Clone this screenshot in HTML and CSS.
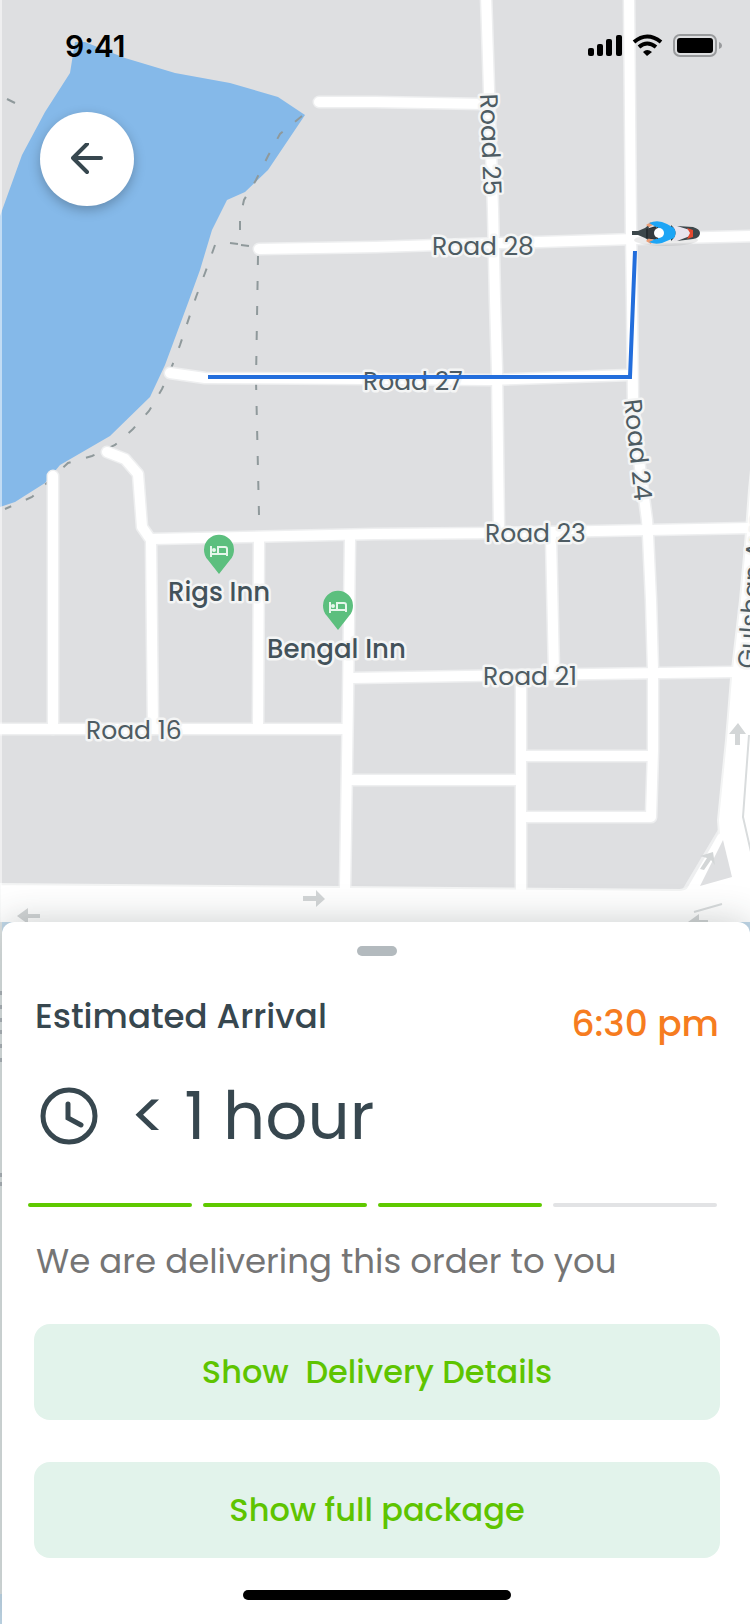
FILE: index.html
```html
<!DOCTYPE html>
<html lang="en">
<head>
<meta charset="utf-8">
<meta name="viewport" content="width=device-width, initial-scale=1">
<title>Order tracking</title>
<link rel="stylesheet" href="styles.css">
</head>
<body>
<main class="screen">
  <svg class="map" viewBox="0 0 750 1624" preserveAspectRatio="xMidYMin slice" role="img" aria-label="Delivery route map">
    <rect class="land" width="750" height="1624"/>
    <path class="water" d="M0 216 22 155 45 112 70 73 75 42H85L125 58 175 73 230 83 278 97 305 115 268 170 245 192 227 200 212 230 200 270 188 303 165 365 150 397 110 436 60 465 45 483 15 502 0 507Z"/>
    <g class="footpath">
      <path d="M302 116 280 134 268 156 256 180 244 200 240 218V232"/>
      <path d="M215 245 205 273 196 297 180 345 172 366 162 389 149 411 133 429 115 445 92 456 68 463 32 497 5 509"/>
      <path d="M258 256 256 380 259 515"/>
      <path d="M230 243 238 244M241 245 249 246M7 99 15 103"/>
    </g>
    <g class="road-edge">
      <path d="M486 -5 489 90 493 210 495 300 497 370 499 530"/>
      <path d="M629 -5 631 230 632 300 633 400 639 460 647 520 648 535 651 600 653 670V750L651 817H526"/>
      <path d="M259 249 375 247 635 239 755 236"/>
      <path d="M170 373 205 378 375 379 490 380 630 375"/>
      <path d="M152 539 375 534 500 533 755 528"/>
      <path d="M319 102H375L484 104"/>
      <path d="M352 678 520 675 735 672"/>
      <path d="M521 680V890M551 536 554 673M350 780H520M521 756H652"/>
      <path d="M53 476V729M107 452 125 459 138 474 142 527 151 540 153 729"/>
      <path d="M259 540 258 729M350 538 348 700 345 890M-5 729H345"/>
      <path d="M686 896 730 822"/>
    </g>
    <path class="avenue-edge" d="M0 884 343 887 680 890Q690 889 697 878L719 834 718 820 726 740 731 678 740 600 745 545 749 490 751 470V1624H0Z"/>
    <g class="road">
      <path d="M486 -5 489 90 493 210 495 300 497 370 499 530"/>
      <path d="M629 -5 631 230 632 300 633 400 639 460 647 520 648 535 651 600 653 670V750L651 817H526"/>
      <path d="M259 249 375 247 635 239 755 236"/>
      <path d="M170 373 205 378 375 379 490 380 630 375"/>
      <path d="M152 539 375 534 500 533 755 528"/>
      <path d="M319 102H375L484 104"/>
      <path d="M352 678 520 675 735 672"/>
      <path d="M521 680V890M551 536 554 673M350 780H520M521 756H652"/>
      <path d="M53 476V729M107 452 125 459 138 474 142 527 151 540 153 729"/>
      <path d="M259 540 258 729M350 538 348 700 345 890M-5 729H345"/>
      <path d="M692 890 722 838"/>
    </g>
    <path class="land" d="M700 886 723 840 732 877Z"/>
    <path class="divider" d="M749 735 743 817 751 852M694 912 722 904"/>
    <g class="lane-arrow">
      <path d="M303 896H316V890L325 899 316 907V901H303Z"/>
      <path d="M40 914H28V908L17 916 28 924V918H40Z"/>
      <path d="M735 745V734H729L738 723 746 734H740V745Z"/>
      <path d="M700 869 707 858 700 856 713 852 715 865 711 860 704 870Z"/>
      <path d="M708 920H699V914L688 922H708Z"/>
    </g>
    <g class="pin">
      <path d="M219 574 208 560A15 15 0 1 1 230 560Z"/>
      <path d="M338 630 327 616A15 15 0 1 1 349 616Z"/>
    </g>
    <g class="bed">
      <path d="M211 546V557M211 554H227M227 556V549Q227 547 225 547H218V554"/><circle cx="214" cy="550" r="1"/>
      <path d="M330 602V613M330 610H346M346 612V605Q346 603 344 603H337V610"/><circle cx="333" cy="606" r="1"/>
    </g>
    <g class="label">
      <text x="432" y="255">Road 28</text>
      <text x="363" y="390">Road 27</text>
      <text x="485" y="542">Road 23</text>
      <text x="483" y="685">Road 21</text>
      <text x="86" y="739">Road 16</text>
      <text transform="translate(480 94) rotate(88)">Road 25</text>
      <text transform="translate(624 400) rotate(84)">Road 24</text>
      <text transform="translate(755 669) rotate(-86)">Gulshan Ave</text>
    </g>
    <g class="label place">
      <text x="168" y="601">Rigs Inn</text>
      <text x="267" y="658">Bengal Inn</text>
    </g>
    <path class="route" d="M208 377H630L635 251"/>
    <g class="rider">
      <ellipse class="rider-shadow" cx="666" cy="240" rx="32" ry="6"/>
      <path fill="#3c474b" d="M632 231H638L645 228 651 223 648 229 650 233 648 237 651 242 645 238 638 235H632Z"/>
      <path fill="#e9e4ed" d="M674 226 691 228 697 233 691 238 674 241Z"/>
      <path fill="#3c474b" d="M677 226 693 227Q700 229 700 233 700 238 693 239L677 241 690 236V230Z"/>
      <path fill="#e4492f" d="M687 228 693 230V237L687 239 690 233Z"/>
      <path fill="#ed9b72" d="M646 225 651 222 653 225 649 227ZM646 241 651 244 653 240 649 238Z"/>
      <path fill="#252d31" d="M646 229 656 226V240L646 238ZM671 225Q680 233 671 241Z"/>
      <path fill="#1da5f5" d="M649 223Q658 219 667 224L674 228Q677 233 674 238L662 243Q655 245 649 242L658 238 662 233 658 228Z"/>
      <path fill="#353b3e" d="M648 229 658 227V239L648 238Z"/>
      <circle cx="659" cy="233" r="5" fill="#fff"/>
    </g>
    <rect class="side" width="2" height="922"/>
    <rect class="side-lower" y="922" width="750" height="702"/>
    <path class="side-text" d="M0 993H2M0 1007H2M0 1020H2M0 1032H2M0 1046H2M0 1060H2M0 1175H2M0 1184H2"/>
    <rect class="side-water" y="1594" width="2" height="30"/>
    <path class="side-water" d="M2 922H14V934H2ZM738 922H750V934H738Z"/>
  </svg>

  <header class="status-bar">
    <time class="clock-time">9:41</time>
    <svg class="status-icons" viewBox="0 0 135 24" aria-hidden="true">
      <rect x="0" y="14" width="6" height="8" rx="2"/>
      <rect x="9" y="10" width="6" height="12" rx="2"/>
      <rect x="18" y="5" width="6" height="17" rx="2"/>
      <rect x="28" y="1" width="6" height="21" rx="2"/>
      <g class="wifi">
        <path d="M46 8Q59 -3 73 8"/>
        <path d="M51 13Q59 6 68 13"/>
      </g>
      <path d="M55 18Q59 14 64 18L59 22Z"/>
      <rect class="battery-shell" x="86" y="1" width="42" height="21" rx="6"/>
      <rect x="89" y="4" width="36" height="15" rx="3"/>
      <path class="battery-tip" d="M131 8Q134 9 134 12 134 14 131 15Z"/>
    </svg>
  </header>
  <nav class="top-nav">
    <button class="back" type="button" aria-label="Back">
      <svg class="back-icon" viewBox="0 0 32 32" aria-hidden="true"><path d="M30 15H2M16 1 2 15 16 29"/></svg>
    </button>
  </nav>

  <section class="sheet">
    <div class="handle"></div>
    <div class="summary">
      <h1 class="summary-title">Estimated Arrival</h1>
      <time class="summary-time">6:30 pm</time>
    </div>
    <div class="eta">
      <svg class="eta-icon" viewBox="0 0 58 58" aria-hidden="true"><circle cx="29" cy="29" r="26"/><path d="M28 17V31L41 38"/></svg>
      <p class="eta-text">&lt; 1 hour</p>
    </div>
    <div class="progress" role="progressbar" aria-label="Delivery progress" aria-valuenow="3" aria-valuemin="0" aria-valuemax="4">
      <span class="step done"></span><span class="step done"></span><span class="step done"></span><span class="step"></span>
    </div>
    <p class="message">We are delivering this order to you</p>
    <div class="actions">
      <button class="action" type="button">Show&nbsp; Delivery Details</button>
      <button class="action" type="button">Show full package</button>
    </div>
    <div class="home-bar"></div>
  </section>
</main>
</body>
</html>
```
FILE: styles.css
```css
* { box-sizing: border-box; }
body { margin: 0; font-family: Poppins, Inter, "Liberation Sans", sans-serif; color: #37474f; }
h1, p { margin: 0; font-weight: 400; }
button { border: 0; padding: 0; font: inherit; cursor: pointer; }

.screen { position: relative; display: flex; flex-direction: column; min-height: 100vh; overflow: hidden; }

/* Map backdrop */
.map { position: absolute; inset: 0; width: 100%; height: 100%; }
.land { fill: #dedfe1; }
.water { fill: #85b9e9; }
.footpath path { fill: none; stroke: #8f999b; stroke-width: 2; stroke-dasharray: 9 16; }
.road-edge path, .road path { fill: none; stroke-linecap: round; stroke-linejoin: round; }
.road-edge path { stroke: #eeeff0; stroke-width: 13; }
.road path { stroke: #fff; stroke-width: 10; }
.avenue-edge { fill: #fff; stroke: #f3f4f4; stroke-width: 2; }
.divider { fill: none; stroke: #d9dcdd; stroke-width: 2; }
.lane-arrow { fill: #d3d6d7; }
.pin { fill: #5cbf7e; }
.bed { fill: none; stroke: #e6f6eb; stroke-width: 2; }
.label { font-size: 25px; fill: #4e5c63; stroke: #f4f5f5; stroke-width: 5; stroke-linejoin: round; paint-order: stroke; }
.place { font-size: 26px; font-weight: 500; fill: #43525a; }
.route { fill: none; stroke: #236edc; stroke-width: 4; }
.rider-shadow { fill: #000; opacity: .08; }
.side { fill: #fff; opacity: .5; }
.side-lower { fill: #dfe4e4; }
.side-text { stroke: #aeb3b9; stroke-width: 4; }
.side-water { fill: #c2d9ea; }

/* Status bar */
.status-bar { position: relative; display: flex; justify-content: space-between; align-items: center; padding: 28px 27px 0 65px; }
.clock-time { font: 600 30px/36px Inter, sans-serif; color: #000; }
.status-icons { width: 135px; height: 24px; }
.wifi { fill: none; stroke: #000; stroke-width: 4; }
.battery-shell { fill: none; stroke: #999b9d; stroke-width: 2; }
.battery-tip { fill: #999b9d; }

.top-nav { position: relative; padding: 48px 40px; }
.back { display: grid; place-items: center; width: 94px; height: 94px; border-radius: 50%; background: #fff; box-shadow: 0 4px 12px rgba(0, 0, 0, .25); }
.back-icon { width: 32px; height: 32px; fill: none; stroke: #37474f; stroke-width: 4; stroke-linecap: round; stroke-linejoin: round; }

/* Bottom sheet */
.sheet { position: relative; display: flex; flex-direction: column; margin: auto 0 0 2px; padding: 24px 30px 24px 32px; border-radius: 12px 12px 0 0; background: #fff; box-shadow: 0 0 36px rgba(40, 50, 50, .25); }
.handle { align-self: center; width: 40px; height: 10px; border-radius: 5px; background: #b3babe; }
.summary { display: flex; justify-content: space-between; align-items: flex-start; margin-top: 36px; padding: 0 1px; }
.summary-title { font-size: 34px; line-height: 48px; font-weight: 500; }
.summary-time { margin-top: 8px; font-size: 36px; line-height: 48px; font-weight: 500; color: #f67c20; }
.eta { display: flex; align-items: center; gap: 32px; margin-top: 28px; padding-left: 6px; }
.eta-icon { width: 58px; height: 58px; fill: none; stroke: #37474f; stroke-width: 5; stroke-linecap: round; }
.eta-text { font-size: 66px; line-height: 80px; }
.progress { display: grid; grid-template-columns: repeat(4, 1fr); gap: 11px; margin: 47px 3px 0 -6px; }
.step { height: 4px; border-radius: 2px; background: #e2e3e5; }
.done { background: #5fc900; }
.message { margin-top: 30px; padding-left: 2px; font-size: 34px; line-height: 48px; color: #757575; }
.actions { display: grid; gap: 42px; margin-top: 39px; }
.action { height: 96px; border-radius: 16px; background: #e2f3eb; color: #5ec400; font-size: 32px; font-weight: 500; }
.home-bar { align-self: center; width: 268px; height: 10px; margin-top: 32px; border-radius: 5px; background: #000; }
```
